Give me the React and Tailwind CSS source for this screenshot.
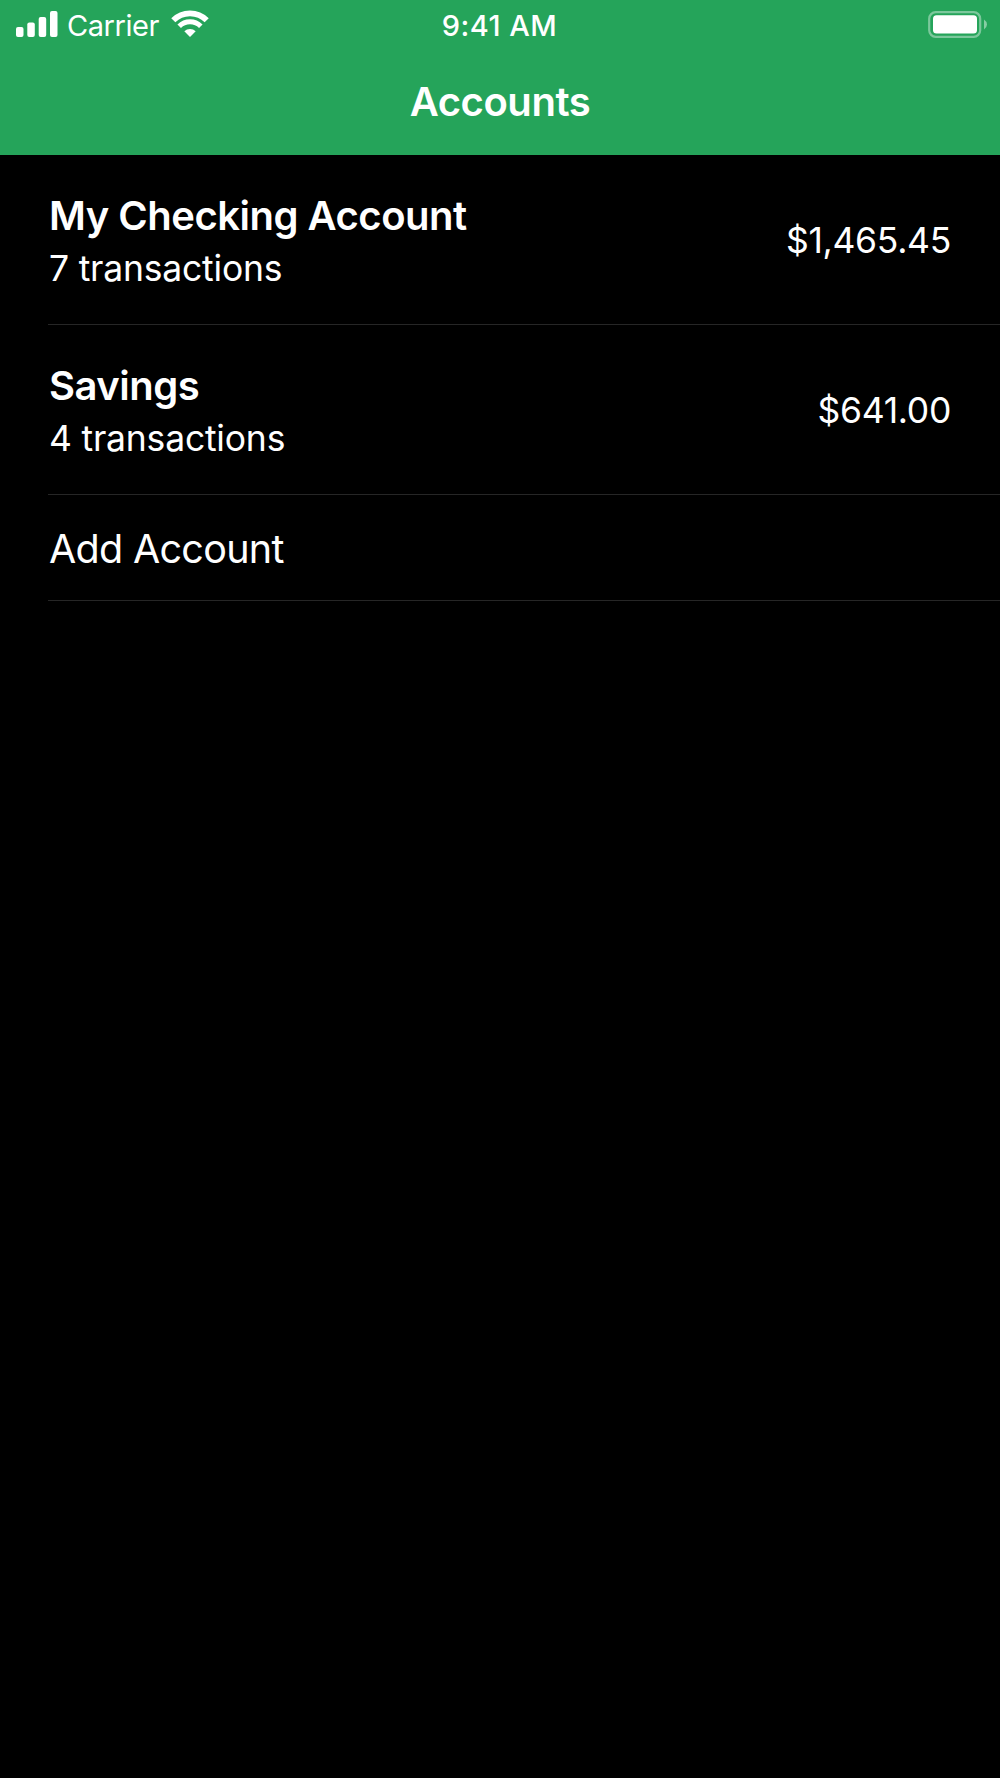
const accounts = [
  { name: 'My Checking Account', transactions: 7, balance: '$1,465.45' },
  { name: 'Savings', transactions: 4, balance: '$641.00' },
]

function StatusBar() {
  return (
    <div className="grid h-[50px] grid-cols-3 pr-[13px] pl-4 text-[29px] leading-[52px]">
      <div className="flex items-start">
        <svg className="mt-[11px]" width="42" height="26" viewBox="0 0 42 26" fill="currentColor">
          <rect x="0" y="16" width="7.5" height="10" rx="2" />
          <rect x="11.3" y="11.5" width="7.5" height="14.5" rx="2" />
          <rect x="22.7" y="6" width="7.5" height="20" rx="2" />
          <rect x="34" y="0" width="7.5" height="26" rx="2" />
        </svg>
        <span className="ml-[9px] tracking-[-0.45px]">Carrier</span>
        <svg className="mt-[10px] ml-[12px]" width="38" height="28" viewBox="0 0 38 28" fill="none" stroke="currentColor">
          <path d="M2.3 10.3A23.6 23.6 0 0 1 35.7 10.3" strokeWidth="5.8" />
          <path d="M8.2 16.2A15.3 15.3 0 0 1 29.8 16.2" strokeWidth="5" />
          <path d="M19 27L13.3 21.3A8.3 8.3 0 0 1 24.7 21.3z" fill="currentColor" stroke="none" />
        </svg>
      </div>
      <div className="pr-[4px] text-center font-[550] tracking-[0.45px]">9:41 AM</div>
      <div className="flex items-start justify-end">
        <svg className="mt-[11px]" width="59" height="28" viewBox="0 0 59 28" fill="currentColor">
          <rect x="1.2" y="1.2" width="51" height="24.6" rx="6.5" fill="none" stroke="currentColor" strokeWidth="2.2" opacity=".4" />
          <rect x="5" y="4.2" width="44" height="18.3" rx="3.5" />
          <path d="M56 8.5q3 2 3 5t-3 5z" opacity=".45" />
        </svg>
      </div>
    </div>
  )
}

function App() {
  return (
    <div className="min-h-[1778px] bg-black font-['Inter',sans-serif] text-white">
      <header className="h-[155px] bg-[#25a45a]">
        <StatusBar />
        <h1 className="pt-[28px] text-center text-[40px] leading-[48px] font-[570] tracking-[-0.45px]">Accounts</h1>
      </header>

      <ul className="pl-[48px]">
        {accounts.map((account) => (
          <li key={account.name} className="flex h-[170px] items-center justify-between border-b border-[#262626] pr-[49px] pl-px">
            <div className="pt-[5px]">
              <h2 className="text-[40px] leading-[53px] font-[570] tracking-[-0.5px]">{account.name}</h2>
              <p className="text-[35.5px] leading-[53px] tracking-[-0.2px]">{account.transactions} transactions</p>
            </div>
            <span className="pt-[2px] text-[35.5px] tracking-[-0.3px]">{account.balance}</span>
          </li>
        ))}
        <li className="flex h-[106px] items-center border-b border-[#262626] pt-[4px] pl-px text-[39.5px] tracking-[-0.7px]">Add Account</li>
      </ul>
    </div>
  )
}

export default App
